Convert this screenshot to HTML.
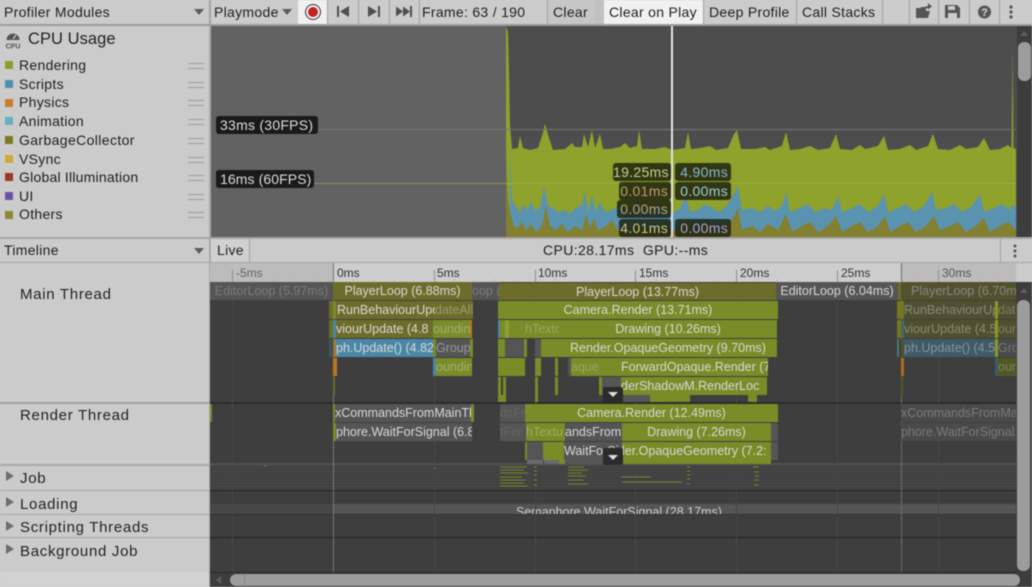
<!DOCTYPE html>
<html><head><meta charset="utf-8">
<style>
html,body{margin:0;padding:0;background:#cbcbcb}
#r{position:relative;width:1032px;height:587px;overflow:hidden;background:#cbcbcb;font-family:"Liberation Sans",sans-serif;font-size:14px;color:#1e1e1e;filter:blur(.45px)}
#r div{position:absolute;box-sizing:border-box;white-space:nowrap}
.t{line-height:18px;letter-spacing:.3px}
.v{width:1px;top:0;height:24px;background:#a2a2a2}
.sw{left:5px;width:8px;height:8px}
.h{left:188px;width:16px;height:6px;border-top:1px solid #9c9c9c;border-bottom:1px solid #9c9c9c}
.b{overflow:hidden;text-align:center;color:#d8d8d8;font-size:12.5px;line-height:18px;letter-spacing:0;height:18px}
.o{background:#6d6d2b}.g{background:#788c27}.a{background:#555}.bl{background:#4a87a6}.og{background:#b9761f}
.d{color:#7b7b7b}
.tk{width:1px;top:270px;height:12px;background:#8d8d8d}
.rl{top:264px;height:18px;line-height:18px;font-size:12px;color:#333}
.lab{left:20px;font-size:15px;line-height:20px;letter-spacing:.7px;color:#222}
.arrow{width:0;height:0;border-left:5px solid transparent;border-right:5px solid transparent;border-top:6px solid #5c5c5c}
.tri{left:6px;width:0;height:0;border-top:5px solid transparent;border-bottom:5px solid transparent;border-left:8px solid #6e6e6e}
.tip{height:18px;background:rgba(28,32,14,.82);border-radius:3px;line-height:18px;text-align:right;padding-right:3px;font-size:14px;letter-spacing:.3px}
.fps{background:#1a1a1a;color:#ddd;border-radius:3px;height:18px;line-height:18px;font-size:14px;letter-spacing:.1px;padding-left:4px;left:216px}
</style></head><body><div id="r">

<!-- TOP TOOLBAR -->
<div style="left:0;top:24px;width:1032px;height:2px;background:#9c9c9c"></div>
<div class="t" style="left:4px;top:3px">Profiler Modules</div>
<div class="arrow" style="left:194px;top:9px"></div>
<div class="v" style="left:209px;width:2px"></div>
<div class="t" style="left:214px;top:3px">Playmode</div>
<div class="arrow" style="left:282px;top:9px"></div>
<div style="left:298px;top:0;width:29px;height:24px;background:#f0f0f0"></div>
<div style="left:305px;top:4px;width:16px;height:16px;border:1.5px solid #333;border-radius:50%"></div>
<div style="left:308px;top:7px;width:10px;height:10px;background:#c4211f;border-radius:50%"></div>
<div class="v" style="left:327px"></div><div class="v" style="left:358px"></div><div class="v" style="left:389px"></div><div class="v" style="left:419px"></div><div class="v" style="left:547px"></div><div class="v" style="left:594px"></div>
<svg style="position:absolute;left:330px;top:0" width="90" height="24"><path fill="#4f4f4f" d="M7 6h2v11H7zM19 6v11l-9-5.500zM38 6l9 5.500-9 5.500zM48 6h2v11h-2zM66 6.500l7 5-7 5zM73 6.500l7 5-7 5zM80 6h2v11h-2z"/></svg>
<div class="t" style="left:422px;top:3px">Frame: 63 / 190</div>
<div style="left:548px;top:0;width:46px;height:24px;background:#c6c6c6"></div>
<div class="t" style="left:553px;top:3px">Clear</div>
<div style="left:594px;top:0;width:10px;height:24px;background:#c0c0c0"></div>
<div style="left:604px;top:0;width:99px;height:24px;background:#f0f0f0"></div>
<div class="t" style="left:609px;top:3px">Clear on Play</div>
<div class="v" style="left:703px"></div>
<div class="t" style="left:709px;top:3px">Deep Profile</div>
<div class="v" style="left:796px"></div>
<div class="t" style="left:802px;top:3px">Call Stacks</div>
<div class="v" style="left:882px"></div><div class="v" style="left:909px"></div><div class="v" style="left:938px"></div><div class="v" style="left:969px"></div><div class="v" style="left:999px"></div>
<svg style="position:absolute;left:914px;top:0" width="118" height="24"><g fill="#555">
<path d="M2 8h5v-1h3v2h2v9H2zM4 18l2-7h10l-2 7z"/><path d="M9 9l1-2 4-1V3l4 3.500-4 3V8l-3 1z"/>
<path fill-rule="evenodd" d="M31 5h12l3 3v10H31zM34 6v4h7V6zM34 13v5h9v-5z"/>
<circle cx="70.500" cy="12" r="6.500"/><circle cx="97" cy="7" r="1.600"/><circle cx="97" cy="12" r="1.600"/><circle cx="97" cy="17" r="1.600"/></g>
<text x="70.500" y="16" fill="#ddd" font-size="11" font-weight="bold" text-anchor="middle" font-family="Liberation Sans">?</text></svg>

<!-- SIDEBAR TOP -->
<svg style="position:absolute;left:4px;top:30px" width="18" height="19"><path fill="#555" d="M2.500 10a6.500 6.500 0 1 1 13 0z"/><path stroke="#ccc" stroke-width="1.200" d="M9 9l3-4"/><text x="9" y="18.500" fill="#555" font-size="7" font-weight="bold" text-anchor="middle" font-family="Liberation Sans">CPU</text></svg>
<div style="left:28px;top:29px;font-size:16.5px;line-height:21px;letter-spacing:.05px;color:#222">CPU Usage</div>
<div class="sw" style="top:61px;background:#8a9e2a"></div><div class="t" style="left:19px;top:56px">Rendering</div><div class="h" style="top:63px"></div>
<div class="sw" style="top:80px;background:#4e8fb0"></div><div class="t" style="left:19px;top:75px">Scripts</div><div class="h" style="top:82px"></div>
<div class="sw" style="top:99px;background:#c87f2a"></div><div class="t" style="left:19px;top:93px">Physics</div><div class="h" style="top:100px"></div>
<div class="sw" style="top:117px;background:#65b0bd"></div><div class="t" style="left:19px;top:112px">Animation</div><div class="h" style="top:119px"></div>
<div class="sw" style="top:136px;background:#7e7a1f"></div><div class="t" style="left:19px;top:131px;letter-spacing:.38px">GarbageCollector</div><div class="h" style="top:138px"></div>
<div class="sw" style="top:155px;background:#d2a83a"></div><div class="t" style="left:19px;top:150px">VSync</div><div class="h" style="top:157px"></div>
<div class="sw" style="top:173px;background:#9a3a22"></div><div class="t" style="left:19px;top:168px;letter-spacing:.22px">Global Illumination</div><div class="h" style="top:175px"></div>
<div class="sw" style="top:192px;background:#6a55a5"></div><div class="t" style="left:19px;top:187px">UI</div><div class="h" style="top:194px"></div>
<div class="sw" style="top:211px;background:#8a8a35"></div><div class="t" style="left:19px;top:205px">Others</div><div class="h" style="top:212px"></div>

<!-- CHART -->
<div style="left:209px;top:26px;width:2px;height:212px;background:#a8a8a8"></div>
<div style="left:211px;top:26px;width:295px;height:212px;background:#626262"></div>
<div style="left:506px;top:26px;width:511px;height:212px;background:#4d4d4d"></div>
<svg style="position:absolute;left:0;top:0" width="1032" height="238">
<polygon fill="#8ea22c" points="506,26 508,32 509,70 510,125 512,149 518,148 520,136 523,148 530,150 538,148 542,136 545,124 549,138 553,150 565,149 572,143 575,147 582,147 584,134 588,147 592,130 595,148 600,134 603,149 610,149 620,147 625,143 630,148 637,146 639,130 642,149 655,149 665,147 672,150 685,148 688,132 691,149 700,148 710,146 716,150 728,148 734,134 737,130 741,149 755,149 765,147 770,150 782,146 786,132 790,150 800,149 810,146 818,150 830,148 836,134 840,149 852,150 860,145 865,149 878,146 884,136 888,150 900,149 910,145 916,150 928,146 933,134 938,149 950,150 960,145 966,149 978,147 984,138 990,150 1000,149 1008,145 1011.500,148 1012.500,48 1013.500,148 1016,149 1016,238 506,238"/>
<polygon fill="#5a93b0" points="510,238 510,148 511,180 512,200 516,207 520,213 523,204 527,210 531,202 535,210 540,208 544,186 548,206 553,208 558,212 565,210 570,214 575,208 582,205 585,192 588,212 592,196 596,212 600,202 605,212 612,210 620,205 625,210 632,212 638,196 642,212 650,208 658,204 665,210 672,214 680,208 686,196 690,212 698,210 705,204 712,208 720,212 728,204 735,192 738,186 742,210 752,208 760,212 768,206 775,211 782,206 786,192 790,212 800,208 808,204 815,212 825,208 832,210 838,196 842,212 852,208 860,204 868,212 878,206 884,194 888,212 898,208 906,204 914,212 924,206 932,192 936,210 946,208 954,204 962,212 972,206 980,194 984,212 994,208 1002,204 1010,210 1013,204 1016,208 1016,238"/>
<polygon fill="#83802f" points="506,238 506,150 508,200 511,216 514,226 518,228 522,222 526,230 531,224 536,232 542,226 546,206 550,226 556,230 562,224 568,232 575,226 582,230 586,214 590,228 594,218 598,230 606,226 612,220 618,230 625,226 632,232 638,222 644,230 655,228 665,226 672,232 680,226 688,218 692,232 700,226 708,222 716,232 724,226 732,220 738,208 742,230 752,226 760,232 768,224 778,230 786,214 792,232 802,226 810,222 818,232 828,226 836,216 842,232 852,226 860,222 868,232 878,226 885,216 890,232 900,226 908,222 916,232 926,226 934,216 940,230 950,226 958,222 966,232 976,226 984,218 990,232 1000,226 1008,222 1016,230 1016,238"/>
<path stroke="#757575" d="M318 129.500H1016"/><path stroke="#a8b760" stroke-opacity=".55" d="M314 183.500H1016"/>
</svg>
<div style="left:671px;top:26px;width:2px;height:212px;background:#e4e4e4"></div>
<div class="fps" style="top:116px;width:102px;letter-spacing:.25px">33ms (30FPS)</div>
<div class="fps" style="top:170px;width:98px">16ms (60FPS)</div>
<div class="tip" style="left:613px;top:163px;width:58px;color:#c6cf90">19.25ms</div>
<div class="tip" style="left:675px;top:163px;width:56px;color:#8ab8d0">4.90ms</div>
<div class="tip" style="left:619px;top:182px;width:52px;color:#c39a74">0.01ms</div>
<div class="tip" style="left:675px;top:182px;width:56px;color:#a0cdd5">0.00ms</div>
<div class="tip" style="left:617px;top:200px;width:54px;color:#b3a67b">0.00ms</div>
<div class="tip" style="left:619px;top:219px;width:52px;color:#c8c88d">4.01ms</div>
<div class="tip" style="left:675px;top:219px;width:56px;color:#aaa2cc">0.00ms</div>
<!-- chart scrollbar -->
<div style="left:1017px;top:26px;width:15px;height:212px;background:#3d3d3d"></div>
<div style="left:1018px;top:42px;width:13px;height:39px;background:#9c9c9c;border-radius:6px"></div>
<div style="left:1020px;top:31px;width:0;height:0;border-left:4px solid transparent;border-right:4px solid transparent;border-bottom:5px solid #5e5e5e"></div>

<!-- TIMELINE TOOLBAR -->
<div style="left:0;top:237px;width:1032px;height:2px;background:#a5a5a5"></div>
<div class="t" style="left:4px;top:241px">Timeline</div>
<div class="arrow" style="left:194px;top:248px"></div>
<div style="left:209px;top:239px;width:2px;height:24px;background:#a8a8a8"></div>
<div style="left:211px;top:239px;width:39px;height:24px;background:#d0d0d0;border-right:1px solid #a2a2a2"></div>
<div class="t" style="left:217px;top:241px">Live</div>
<div class="t" style="left:543px;top:241px;letter-spacing:.38px">CPU:28.17ms&nbsp;&nbsp;GPU:--ms</div>
<div class="v" style="left:1000px;top:239px;height:24px"></div>
<svg style="position:absolute;left:1010px;top:243px" width="10" height="16"><g fill="#555"><circle cx="5" cy="3" r="1.500"/><circle cx="5" cy="8" r="1.500"/><circle cx="5" cy="13" r="1.500"/></g></svg>
<div style="left:0;top:262px;width:1032px;height:1px;background:#a5a5a5"></div>

<!-- RULER -->
<div style="left:210px;top:263px;width:123px;height:19px;background:#bcbcbc"></div>
<div style="left:333px;top:263px;width:568px;height:19px;background:#cdcdcd"></div>
<div style="left:901px;top:263px;width:115px;height:19px;background:#bcbcbc"></div>
<div style="left:1016px;top:263px;width:16px;height:19px;background:#cbcbcb"></div>
<div class="tk" style="left:232px"></div><div class="tk" style="left:333px"></div><div class="tk" style="left:434px"></div><div class="tk" style="left:535px"></div><div class="tk" style="left:635px"></div><div class="tk" style="left:736px"></div><div class="tk" style="left:837px"></div><div class="tk" style="left:938px"></div>
<svg style="position:absolute;left:210px;top:278px" width="806" height="4"><path stroke="#a3a3a3" fill="none" stroke-dasharray="1 19.170" d="M2 2H806"/></svg>
<div class="rl" style="left:236px;color:#666">-5ms</div><div class="rl" style="left:337px">0ms</div><div class="rl" style="left:437px">5ms</div><div class="rl" style="left:538px">10ms</div><div class="rl" style="left:639px">15ms</div><div class="rl" style="left:740px">20ms</div><div class="rl" style="left:841px">25ms</div><div class="rl" style="left:942px;color:#555">30ms</div>

<!-- LEFT LABELS -->
<div class="lab" style="top:285px">Main Thread</div>
<div style="left:0;top:402px;width:210px;height:2px;background:#a2a2a2"></div>
<div class="lab" style="top:406px">Render Thread</div>
<div style="left:0;top:464px;width:210px;height:2px;background:#a8a8a8"></div>
<div class="tri" style="top:471px"></div><div class="lab" style="top:469px">Job</div>
<div style="left:0;top:490px;width:210px;height:1px;background:#a8a8a8"></div>
<div class="tri" style="top:497px"></div><div class="lab" style="top:495px">Loading</div>
<div style="left:0;top:514px;width:210px;height:1px;background:#a8a8a8"></div>
<div class="tri" style="top:521px"></div><div class="lab" style="top:518px">Scripting Threads</div>
<div style="left:0;top:537px;width:210px;height:1px;background:#a8a8a8"></div>
<div class="tri" style="top:544px"></div><div class="lab" style="top:542px">Background Job</div>
<div style="left:0;top:572px;width:210px;height:15px;background:#d2d2d2"></div>
<div style="left:209px;top:263px;width:1px;height:324px;background:#a8a8a8"></div>

<!-- TRACK BACKGROUND -->
<div style="left:210px;top:282px;width:807px;height:291px;background:#3e3e3e"></div>
<div style="left:210px;top:402px;width:807px;height:2px;background:#2b2b2b"></div>
<div style="left:210px;top:463px;width:807px;height:2px;background:#505050"></div>
<div style="left:210px;top:465px;width:807px;height:25px;background:repeating-linear-gradient(#4a4a4a 0,#4a4a4a 1px,#3f3f3f 1px,#3f3f3f 3px)"></div>
<div style="left:210px;top:490px;width:807px;height:1px;background:#1f1f1f"></div>
<div style="left:210px;top:504px;width:123px;height:10px;background:#474747"></div>
<div style="left:333px;top:504px;width:684px;height:10px;background:#555;overflow:hidden;font-size:12.5px;line-height:17px;color:#ccc;padding-left:183px">Semaphore.WaitForSignal (28.17ms)</div>
<div style="left:210px;top:514px;width:807px;height:1px;background:#333"></div>
<div style="left:210px;top:537px;width:807px;height:1px;background:#1f1f1f"></div>
<div style="left:210px;top:572px;width:807px;height:1px;background:#2a2a2a"></div>
<div style="left:333px;top:263px;width:1px;height:309px;background:#777"></div>
<div style="left:901px;top:263px;width:1px;height:309px;background:#6a6a6a"></div>
<svg style="position:absolute;left:210px;top:282px" width="807" height="290"><path stroke="#464646" d="M22.500 0V290M224.500 0V290M325.500 0V290M425.500 0V290M526.500 0V290M627.500 0V290M728.500 0V290"/></svg>

<!-- job ticks -->
<svg style="position:absolute;left:0;top:0" width="1032" height="587"><g stroke="#78882a" stroke-width="1" fill="none">
<path d="M500 467h27M500 470h24M500 473h28M500 477h22M500 480h26M500 483h24M500 486h28M534 467h3M534 471h3M534 475h3M534 480h3M534 485h3M568 467h16M568 470h20M568 473h14M568 476h18M568 480h16M568 484h20M621 477h30M622 482h60M687 467h3M687 471h3M687 475h3M687 479h3M687 484h3M753 467h6M754 472h5M755 476h4M754 480h5M754 485h5M264 466h2M434 468h2"/></g></svg>

<!-- MAIN THREAD ROW 1 -->
<div class="b a d" style="left:210px;top:282px;width:123px">EditorLoop (5.97ms)</div>
<div class="b o" style="left:333px;top:282px;width:139px">PlayerLoop (6.88ms)</div>
<div class="b a d" style="left:472px;top:282px;width:27px;text-align:left">oop (</div>
<div class="b o" style="left:499px;top:283px;width:277px;height:17px">PlayerLoop (13.77ms)</div>
<div class="b a" style="left:776px;top:282px;width:122px">EditorLoop (6.04ms)</div>
<div class="b" style="left:898px;top:282px;width:3px;background:#6d6d2b"></div>
<div class="b" style="left:901px;top:282px;width:115px;background:#51522e;color:#888;text-align:left;padding-left:10px">PlayerLoop (6.70m</div>
<!-- ROW 2 -->
<div class="b o" style="left:329px;top:301px;width:4px"></div>
<div class="b o" style="left:333px;top:301px;width:102px;text-align:left;padding-left:4px">RunBehaviourUpdateAll</div>
<div class="b o d" style="left:435px;top:301px;width:38px;text-align:left;color:#9a9a72">dateAll</div>
<div class="b g" style="left:333px;top:301px;width:3px"></div>
<div class="b g" style="left:498px;top:301px;width:280px">Camera.Render (13.71ms)</div>
<div class="b" style="left:897px;top:301px;width:7px;background:#75761f"></div>
<div class="b" style="left:904px;top:301px;width:91px;background:#4f5030;color:#8a8a78;text-align:left;padding-left:0">RunBehaviourUp</div>
<div class="b" style="left:995px;top:301px;width:3px;background:#8a9a25"></div>
<div class="b" style="left:998px;top:301px;width:18px;background:#4f5030;color:#7e7e60;text-align:left">dat</div>
<!-- ROW 3 -->
<div class="b o" style="left:329px;top:320px;width:4px"></div>
<div class="b bl" style="left:333px;top:320px;width:3px"></div>
<div class="b o" style="left:336px;top:320px;width:97px;text-align:left">viourUpdate (4.8</div>
<div class="b g" style="left:433px;top:320px;width:37px;text-align:left;color:#a7ad77">ounding</div>
<div class="b og" style="left:470px;top:320px;width:2px"></div>
<div class="b bl" style="left:498px;top:320px;width:2px"></div>
<div class="b g" style="left:500px;top:320px;width:277px"></div>
<div class="b" style="left:505px;top:320px;width:4px;background:#8f9f38"></div>
<div class="b g" style="left:525px;top:320px;width:34px;text-align:left;color:#9aa665">hTexto</div>
<div class="b g" style="left:559px;top:320px;width:218px">Drawing (10.26ms)</div>
<div class="b" style="left:897px;top:320px;width:4px;background:#75761f"></div>
<div class="b" style="left:901px;top:320px;width:3px;background:#44696f"></div>
<div class="b" style="left:904px;top:320px;width:91px;background:#4f5030;color:#8a8a78;text-align:left">viourUpdate (4.5</div>
<div class="b" style="left:995px;top:320px;width:3px;background:#8a9a25"></div>
<div class="b" style="left:998px;top:320px;width:18px;background:#4f5030;color:#7e7e60;text-align:left">oun</div>
<!-- ROW 4 -->
<div class="b" style="left:329px;top:339px;width:3px;background:#3d5a55"></div>
<div class="b og" style="left:334px;top:339px;width:2px"></div>
<div class="b bl" style="left:336px;top:339px;width:97px;text-align:left">ph.Update() (4.82</div>
<div class="b g" style="left:433px;top:339px;width:3px"></div>
<div class="b a" style="left:436px;top:339px;width:34px;text-align:left;color:#999">Group</div>
<div class="b g" style="left:470px;top:339px;width:3px"></div>
<div class="b g" style="left:498px;top:339px;width:7px"></div>
<div class="b a" style="left:505px;top:339px;width:19px"></div>
<div class="b g" style="left:524px;top:339px;width:3px"></div>
<div class="b a" style="left:535px;top:339px;width:6px"></div>
<div class="b g" style="left:541px;top:339px;width:236px;text-align:left;padding-left:29px">Render.OpaqueGeometry (9.70ms)</div>
<div class="b" style="left:897px;top:339px;width:2px;background:#4b7a6a"></div>
<div class="b" style="left:901px;top:339px;width:3px;background:#51522e"></div>
<div class="b" style="left:904px;top:339px;width:91px;background:#3f5a68;color:#88949a;text-align:left">ph.Update() (4.56</div>
<div class="b" style="left:995px;top:339px;width:3px;background:#8a9a25"></div>
<div class="b" style="left:998px;top:339px;width:18px;background:#4a4a4a;color:#777;text-align:left">Gro</div>
<!-- ROW 5 -->
<div class="b og" style="left:333px;top:358px;width:4px"></div>
<div class="b bl" style="left:433px;top:358px;width:3px"></div>
<div class="b g" style="left:436px;top:358px;width:36px;text-align:left;color:#a7ad77">ounding</div>
<div class="b g" style="left:498px;top:358px;width:27px"></div>
<div class="b g" style="left:535px;top:358px;width:6px"></div>
<div class="b g" style="left:555px;top:358px;width:3px"></div>
<div class="b a" style="left:568px;top:358px;width:3px"></div>
<div class="b g" style="left:571px;top:358px;width:50px;text-align:left;color:#9aa665">aque</div>
<div class="b g" style="left:621px;top:358px;width:147px;text-align:left">ForwardOpaque.Render (7</div>
<div class="b" style="left:901px;top:358px;width:3px;background:#a87020"></div>
<div class="b" style="left:995px;top:358px;width:3px;background:#3f5a68"></div>
<div class="b" style="left:998px;top:358px;width:18px;background:#4f5a22;color:#7e7e60;text-align:left">oun</div>
<!-- ROW 6 -->
<div class="b o" style="left:333px;top:377px;width:2px"></div>
<div class="b g" style="left:498px;top:377px;width:3px"></div>
<div class="b g" style="left:503px;top:377px;width:3px"></div>
<div class="b g" style="left:535px;top:377px;width:3px"></div>
<div class="b g" style="left:555px;top:377px;width:3px"></div>
<div class="b g" style="left:599px;top:377px;width:3px"></div>
<div class="b a" style="left:602px;top:377px;width:19px"></div>
<div class="b g" style="left:621px;top:377px;width:146px;text-align:left">derShadowM.RenderLoc</div>
<div class="b" style="left:901px;top:377px;width:2px;background:#56562a"></div>
<!-- ROW 7 -->
<div class="b g" style="left:498px;top:395px;width:8px;height:7px"></div>
<div class="b g" style="left:535px;top:395px;width:3px;height:7px"></div>
<div class="b a" style="left:623px;top:395px;width:27px;height:7px"></div>
<div class="b g" style="left:650px;top:395px;width:40px;height:7px"></div>
<div class="b g" style="left:748px;top:395px;width:9px;height:7px"></div>
<div style="left:603px;top:387px;width:20px;height:15px;background:#2b2b2b;border-radius:2px 2px 0 0"></div>
<div style="left:608px;top:392px;width:0;height:0;border-left:5px solid transparent;border-right:5px solid transparent;border-top:5px solid #ddd"></div>

<!-- RENDER THREAD -->
<div class="b g" style="left:210px;top:404px;width:2px"></div>
<div class="b g" style="left:333px;top:404px;width:2px"></div>
<div class="b a" style="left:335px;top:404px;width:136px;text-align:left">xCommandsFromMainTh</div>
<div class="b g" style="left:471px;top:404px;width:3px"></div>
<div class="b a d" style="left:500px;top:404px;width:25px;text-align:left;color:#666">dsFr</div>
<div class="b g" style="left:525px;top:404px;width:253px">Camera.Render (12.49ms)</div>
<div class="b a d" style="left:901px;top:404px;width:115px;text-align:left;background:#4a4a4a">xCommandsFromMa</div>
<div class="b g" style="left:333px;top:423px;width:3px"></div>
<div class="b a" style="left:336px;top:423px;width:136px;text-align:left">phore.WaitForSignal (6.8</div>
<div class="b a d" style="left:500px;top:423px;width:26px;text-align:left;color:#666">tFor</div>
<div class="b g" style="left:526px;top:423px;width:39px;text-align:left;color:#a0aa6a">hTextu</div>
<div class="b a" style="left:565px;top:423px;width:57px;text-align:left">andsFrom</div>
<div class="b g" style="left:622px;top:423px;width:149px">Drawing (7.26ms)</div>
<div class="b a" style="left:771px;top:423px;width:7px"></div>
<div class="b a d" style="left:901px;top:423px;width:115px;text-align:left;background:#4a4a4a">phore.WaitForSignal</div>
<div class="b g" style="left:525px;top:442px;width:2px"></div>
<div class="b a" style="left:527px;top:442px;width:16px"></div>
<div class="b g" style="left:543px;top:442px;width:21px"></div>
<div class="b a" style="left:564px;top:442px;width:58px;text-align:left">WaitForSig</div>
<div class="b g" style="left:622px;top:442px;width:149px;text-align:left">ler.OpaqueGeometry (7.2:</div>
<div class="b a" style="left:771px;top:442px;width:7px"></div>
<div class="b a" style="left:527px;top:460px;width:16px;height:4px;background:#6a6a6a"></div>
<div class="b a" style="left:544px;top:460px;width:15px;height:4px;background:#6a6a6a"></div>
<div class="b g" style="left:559px;top:460px;width:6px;height:4px"></div>
<div class="b a" style="left:565px;top:460px;width:38px;height:4px"></div>
<div class="b g" style="left:623px;top:460px;width:148px;height:4px"></div>
<div style="left:603px;top:448px;width:20px;height:17px;background:#2b2b2b;border-radius:2px"></div>
<div style="left:608px;top:455px;width:0;height:0;border-left:5px solid transparent;border-right:5px solid transparent;border-top:5px solid #ddd"></div>

<!-- SCROLLBARS -->
<div style="left:1016px;top:282px;width:16px;height:291px;background:#3d3d3d"></div>
<div style="left:1017px;top:300px;width:13px;height:271px;background:#9c9c9c;border-radius:6px"></div>
<div style="left:1020px;top:288px;width:0;height:0;border-left:4px solid transparent;border-right:4px solid transparent;border-bottom:5px solid #5e5e5e"></div>
<div style="left:210px;top:573px;width:822px;height:14px;background:#3d3d3d"></div>
<div style="left:230px;top:574px;width:790px;height:12px;background:#9c9c9c;border-radius:6px"></div>
<div style="left:244px;top:574px;width:1px;height:12px;background:#8a8a8a"></div>
<div style="left:216px;top:576px;width:0;height:0;border-top:4px solid transparent;border-bottom:4px solid transparent;border-right:5px solid #5e5e5e"></div>
</div></body></html>
